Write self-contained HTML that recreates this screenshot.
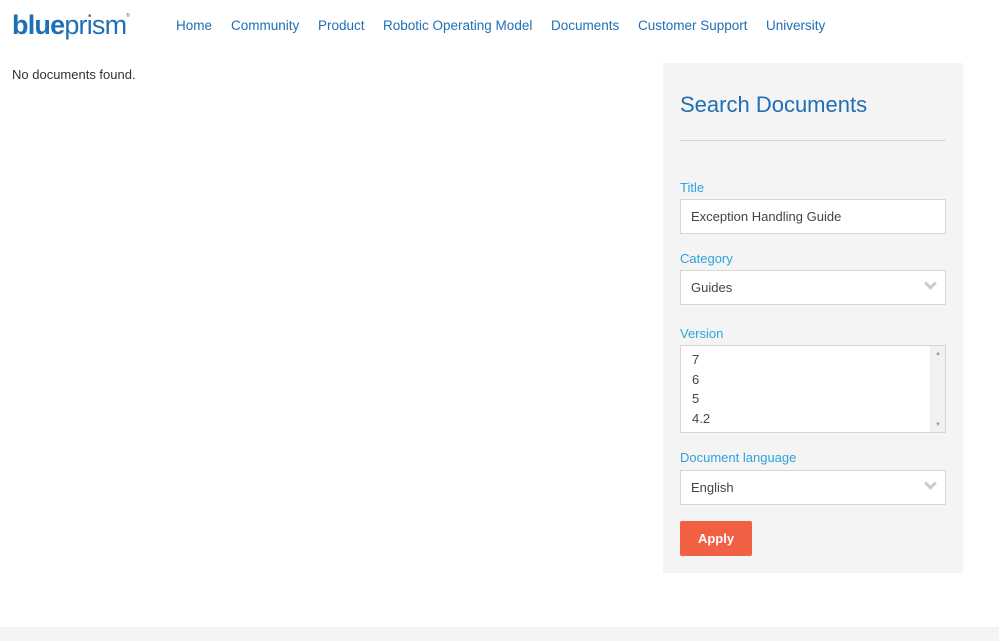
<!DOCTYPE html>
<html><head><style>
*{box-sizing:border-box;margin:0;padding:0}
body{width:999px;height:641px;background:#fff;font-family:"Liberation Sans",sans-serif;position:relative;overflow:hidden;color:#333}
.a{position:absolute}
.nav a{position:absolute;top:18px;font-size:13.5px;color:#1f6fb5;text-decoration:none}
.lbl{position:absolute;left:680px;font-size:13px;color:#2ea3dc}
.box{position:absolute;left:680px;width:266px;background:#fff;border:1px solid #d6d6d6;font-size:13px;color:#444;padding-left:10px}
.chev{position:absolute;right:10px;width:9px;height:9px;border-right:3px solid #ccc;border-bottom:3px solid #ccc;transform:rotate(45deg);top:8px}
</style></head><body>
<div class="a" style="left:12px;top:10px;font-size:27px;color:#1f6fb5;letter-spacing:-0.8px"><span style="font-weight:bold;">blue</span><span style="font-weight:normal">prism</span></div>
<div class="a" style="left:126px;top:13px;font-size:5px;color:#1f6fb5">®</div>
<div class="nav">
<a style="left:176px">Home</a><a style="left:231px">Community</a><a style="left:318px">Product</a><a style="left:383px">Robotic Operating Model</a><a style="left:551px">Documents</a><a style="left:638px">Customer Support</a><a style="left:766px">University</a>
</div>
<div class="a" style="left:12px;top:67px;font-size:13px;color:#333">No documents found.</div>
<div class="a" style="left:663px;top:63px;width:300px;height:510px;background:#f4f4f4"></div>
<div class="a" style="left:680px;top:92px;font-size:22px;color:#1f6fb5">Search Documents</div>
<div class="a" style="left:680px;top:140px;width:266px;height:1px;background:#d8d8d8"></div>
<div class="lbl" style="top:180px">Title</div>
<div class="box" style="top:199px;height:35px;line-height:33px">Exception Handling Guide</div>
<div class="lbl" style="top:251px">Category</div>
<div class="box" style="top:270px;height:35px;line-height:33px">Guides<div class="chev"></div></div>
<div class="lbl" style="top:326px">Version</div>
<div class="box" style="top:345px;height:88px;padding-top:4px;line-height:19.5px;padding-left:11px">7<br>6<br>5<br>4.2
<div class="a" style="right:0;top:0;width:15px;height:86px;background:#f1f1f1"></div>
<div class="a" style="right:4px;top:5px;font-size:6px;color:#999;line-height:6px">▲</div>
<div class="a" style="right:4px;bottom:4px;font-size:6px;color:#999;line-height:6px">▼</div>
</div>
<div class="lbl" style="top:450px">Document language</div>
<div class="box" style="top:470px;height:35px;line-height:33px">English<div class="chev"></div></div>
<div class="a" style="left:680px;top:521px;width:72px;height:35px;background:#f26044;border-radius:2px;color:#fff;font-weight:bold;font-size:13px;text-align:center;line-height:35px">Apply</div>
<div class="a" style="left:0;top:627px;width:999px;height:14px;background:#f4f4f4"></div>
</body></html>
